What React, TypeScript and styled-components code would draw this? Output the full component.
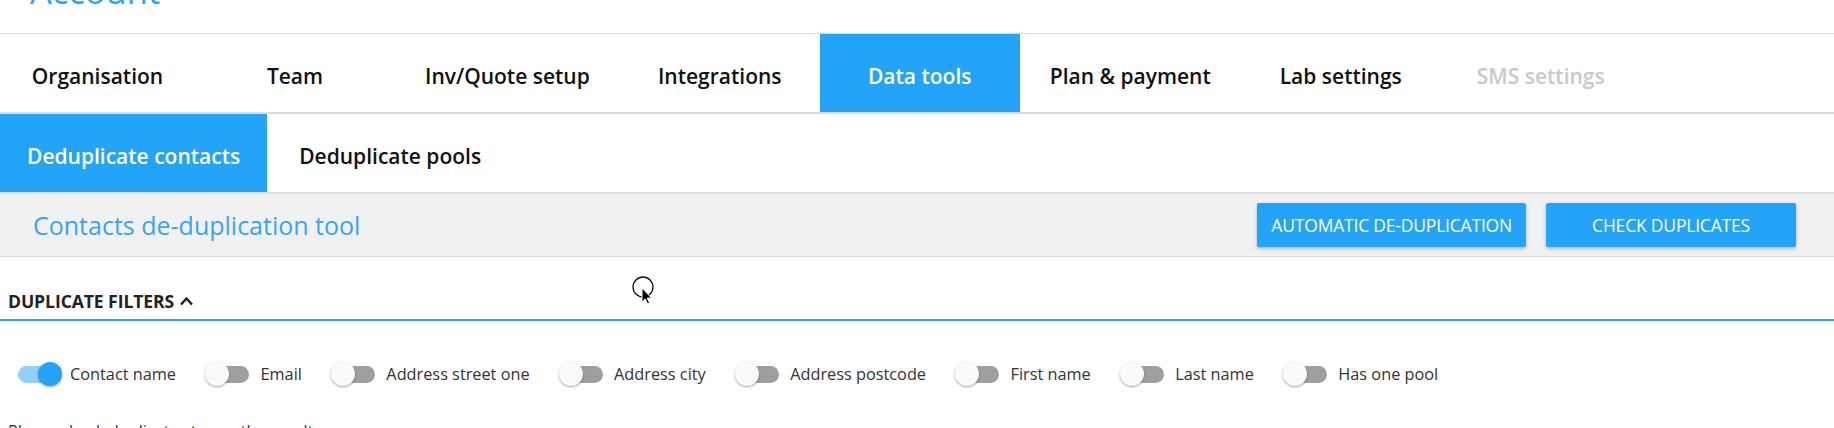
import React from "react";
import styled, { createGlobalStyle } from "styled-components";

const GlobalStyle = createGlobalStyle`
  html, body { margin: 0; padding: 0; background: #ffffff; }
  body { font-family: "Open Sans", "Noto Sans", Arial, sans-serif; color: #111; }
  * { box-sizing: border-box; }
`;

const BLUE = "#24a4f9";

const Page = styled.div`
  position: relative;
  width: 100%;
  height: 428px;
  overflow: hidden;
  background: #fff;
`;

const Header = styled.header`
  height: 34px;
  overflow: hidden;
  border-bottom: 1px solid #dcdcdc;
  padding-left: 30px;
`;

const HeaderTitle = styled.h1`
  margin: -26px 0 0 0;
  font-size: 34.5px;
  line-height: 34px;
  font-weight: 400;
  color: ${BLUE};
`;

const TabBar = styled.nav<{ $gap?: number }>`
  display: flex;
  gap: ${(p) => p.$gap ?? 0}px;
  height: 80px;
  border-bottom: 2px solid #dddddd;
`;

const Tab = styled.div<{ $active?: boolean; $disabled?: boolean; $pad: number; $min: number }>`
  display: flex;
  align-items: center;
  justify-content: center;
  min-width: ${(p) => p.$min}px;
  padding: 5px ${(p) => p.$pad}px 0;
  font-size: 21px;
  font-weight: 600;
  white-space: nowrap;
  background: ${(p) => (p.$active ? BLUE : "transparent")};
  color: ${(p) => (p.$active ? "#ffffff" : p.$disabled ? "#c9c9c9" : "#111111")};
`;

const MainTab = styled(Tab)`
  &:first-child {
    min-width: 195px;
  }
`;

const Toolbar = styled.div`
  display: flex;
  align-items: center;
  justify-content: space-between;
  height: 63px;
  padding: 0 38px 0 33px;
  background: #f1f1f1;
  border-bottom: 1px solid #dddddd;
`;

const ToolTitle = styled.h2`
  margin: 0;
  font-size: 25px;
  font-weight: 400;
  color: #3aa5ee;
`;

const Actions = styled.div`
  display: flex;
  gap: 20px;
`;

const ActionButton = styled.button`
  height: 44px;
  min-width: 250px;
  padding: 0 14px;
  border: none;
  border-radius: 2px;
  background: ${BLUE};
  color: #ffffff;
  font-family: "Open Sans", Arial, sans-serif;
  font-size: 17.5px;
  font-weight: 400;
  text-transform: uppercase;
  letter-spacing: -0.2px;
  box-shadow: 0 2px 4px rgba(0, 0, 0, 0.18), 0 1px 2px rgba(0, 0, 0, 0.12);
  cursor: pointer;
`;

const FiltersHeader = styled.div`
  display: flex;
  align-items: flex-end;
  height: 64px;
  padding: 0 8px 7px;
  border-bottom: 2px solid #2da2ef;
`;

const FiltersTitle = styled.div`
  display: flex;
  align-items: center;
  gap: 5px;
  font-size: 17.6px;
  line-height: 22px;
  font-weight: 700;
  color: #222;
  text-transform: uppercase;
  letter-spacing: -0.1px;
`;

const SwitchRow = styled.div`
  display: flex;
  align-items: center;
  height: 40px;
  margin-top: 33px;
  padding-left: 14.5px;
  gap: 29px;
`;

const SwitchItem = styled.label`
  display: flex;
  align-items: center;
  gap: 8.5px;
  font-size: 16.3px;
  color: #333;
  white-space: nowrap;
`;

const SwitchRoot = styled.span`
  position: relative;
  display: inline-block;
  width: 47px;
  height: 24px;
  flex: none;
`;

const Track = styled.span<{ $on: boolean }>`
  position: absolute;
  left: 3px;
  top: 4px;
  width: 41px;
  height: 17px;
  border-radius: 9px;
  background: ${(p) => (p.$on ? "#92cffb" : "#9f9f9f")};
`;

const Thumb = styled.span<{ $on: boolean }>`
  position: absolute;
  top: 0;
  left: ${(p) => (p.$on ? 23 : 0)}px;
  width: 24px;
  height: 24px;
  border-radius: 50%;
  background: ${(p) => (p.$on ? BLUE : "#fafafa")};
  box-shadow: 0 1px 3px rgba(0, 0, 0, 0.25), 0 1px 1px rgba(0, 0, 0, 0.14);
`;

const Message = styled.p`
  margin: 25px 0 0;
  padding-left: 8px;
  font-size: 16.3px;
  line-height: 24px;
  color: #333;
`;

const CursorMark = styled.svg`
  position: absolute;
  left: 630px;
  top: 274px;
  pointer-events: none;
`;

const mainTabs = [
  { label: "Organisation" },
  { label: "Team" },
  { label: "Inv/Quote setup" },
  { label: "Integrations" },
  { label: "Data tools", active: true },
  { label: "Plan & payment" },
  { label: "Lab settings" },
  { label: "SMS settings", disabled: true },
];

const subTabs = [
  { label: "Deduplicate contacts", active: true },
  { label: "Deduplicate pools" },
];

const filters = [
  { label: "Contact name", on: true },
  { label: "Email", on: false },
  { label: "Address street one", on: false },
  { label: "Address city", on: false },
  { label: "Address postcode", on: false },
  { label: "First name", on: false },
  { label: "Last name", on: false },
  { label: "Has one pool", on: false },
];

function Switch({ on }: { on: boolean }) {
  return (
    <SwitchRoot>
      <Track $on={on} />
      <Thumb $on={on} />
    </SwitchRoot>
  );
}

export default function App() {
  return (
    <>
      <GlobalStyle />
      <Page>
        <Header>
          <HeaderTitle>Account</HeaderTitle>
        </Header>
        <TabBar>
          {mainTabs.map((t) => (
            <MainTab key={t.label} $active={t.active} $disabled={t.disabled} $pad={30} $min={200}>
              {t.label}
            </MainTab>
          ))}
        </TabBar>
        <TabBar $gap={5}>
          {subTabs.map((t) => (
            <Tab key={t.label} $active={t.active} $pad={27} $min={0}>
              {t.label}
            </Tab>
          ))}
        </TabBar>
        <Toolbar>
          <ToolTitle>Contacts de-duplication tool</ToolTitle>
          <Actions>
            <ActionButton>Automatic de-duplication</ActionButton>
            <ActionButton>Check duplicates</ActionButton>
          </Actions>
        </Toolbar>
        <FiltersHeader>
          <FiltersTitle>
            Duplicate filters
            <svg width="15" height="14" viewBox="0 0 15 14">
              <path d="M2 10.5 L7.5 4.5 L13 10.5" fill="none" stroke="#222" strokeWidth="2.5" />
            </svg>
          </FiltersTitle>
        </FiltersHeader>
        <SwitchRow>
          {filters.map((f) => (
            <SwitchItem key={f.label}>
              <Switch on={f.on} />
              {f.label}
            </SwitchItem>
          ))}
        </SwitchRow>
        <Message>Please check duplicates to see the results</Message>
        <CursorMark width="30" height="34" viewBox="0 0 30 34">
          <circle cx="13" cy="13" r="10" fill="none" stroke="#111" strokeWidth="1.3" />
          <path
            d="M12 14 L12 28 L15.2 25 L17.6 30 L19.6 29 L17.2 24.2 L21.5 24 Z"
            fill="#000"
            stroke="#fff"
            strokeWidth="1"
          />
        </CursorMark>
      </Page>
    </>
  );
}
